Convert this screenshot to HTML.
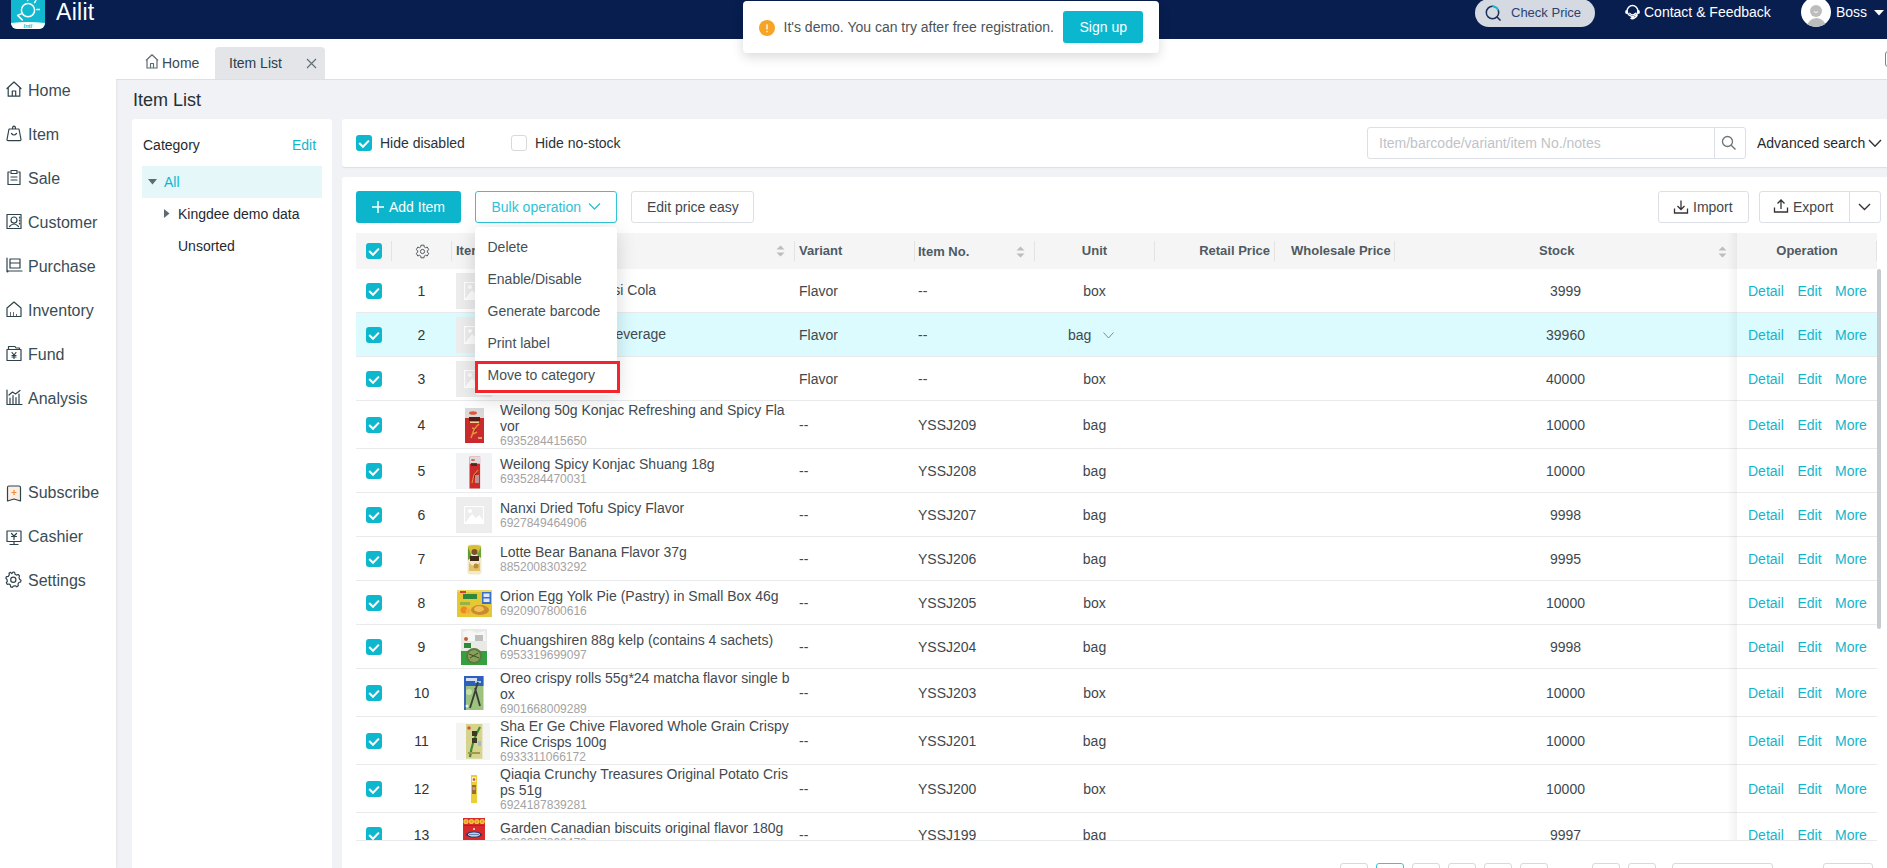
<!DOCTYPE html>
<html><head><meta charset="utf-8">
<style>
*{box-sizing:border-box;margin:0;padding:0}
html,body{width:1887px;height:868px;overflow:hidden}
body{position:relative;background:#f0f2f5;font-family:"Liberation Sans",sans-serif;color:#333;}
.a{position:absolute}
.t{position:absolute;white-space:nowrap;line-height:1}
.f12{font-size:12px}.f13{font-size:13px}.f14{font-size:14px}.f16{font-size:16px}.f18{font-size:18px}
#hdr{left:0;top:0;width:1887px;height:39px;background:#071e4f}
#side{left:0;top:39px;width:116px;height:829px;background:#fff;box-shadow:1px 0 2px rgba(0,0,0,.06)}
.mi{color:#3a4c55}
#tabs{left:116px;top:39px;width:1771px;height:41px;background:#fff;border-bottom:1px solid #dcdfe6}
.card{background:#fff;border-radius:3px}
.cb{position:absolute;width:16px;height:16px;border-radius:3px;background:#0db7ce}
.cb svg{position:absolute;left:0;top:0}
.cbo{position:absolute;width:16px;height:16px;border-radius:3px;background:#fff;border:1px solid #d9d9d9}
.btn{position:absolute;border-radius:3px;border:1px solid #d9dce2;background:#fff}
.row{position:absolute;left:356px;width:1521px;border-bottom:1px solid #ebeef0;background:#fff}
.num{color:#333}
.link{color:#13b5cc}
.img{position:absolute;width:36px;height:36px;background:#eeeeee}
</style></head><body>

<!-- HEADER -->
<div id="hdr" class="a">
  <div class="a" style="left:11px;top:-5px;width:34px;height:34px;border-radius:6px;background:#12b8cf;overflow:hidden">
    <svg class="a" style="left:0;top:0" width="34" height="34" viewBox="0 0 34 34">
      <circle cx="17" cy="15.2" r="6.6" fill="none" stroke="#fff" stroke-width="1.5"/>
      <path d="M10.8 18.6 L6.6 20.4 L11.4 25" fill="none" stroke="#fff" stroke-width="1.5" stroke-linejoin="round" stroke-linecap="round"/>
      <path d="M25.8 14.5 h2.6 M23.6 7.6 l1.2 -2 M16.6 3.8 v1.6" stroke="#fff" stroke-width="1.5" stroke-linecap="round"/>
      <path d="M0 28 Q17 26.2 34 28 V34 H0Z" fill="#fff"/>
      <text x="16.8" y="33.2" font-size="5.6" font-weight="bold" fill="#12b8cf" text-anchor="middle" font-family="Liberation Sans" font-style="italic">Intl</text>
    </svg>
  </div>
  <div class="t" style="left:56px;top:0.6px;font-size:23px;letter-spacing:0.3px;color:#fff">Ailit</div>

  <div class="a" style="left:1475px;top:-1px;width:120px;height:28px;border-radius:14px;background:#d5d9e1"></div>
  <svg class="a" style="left:1485px;top:4.5px" width="17" height="17" viewBox="0 0 17 17">
    <circle cx="7.5" cy="7.5" r="6.2" fill="none" stroke="#1a2f57" stroke-width="1.5"/>
    <path d="M7.5 1.3 A6.2 6.2 0 0 1 13.2 5.6" fill="none" stroke="#19c3e0" stroke-width="1.5"/>
    <path d="M12 12 L15.5 15.5" stroke="#1a2f57" stroke-width="1.6"/>
  </svg>
  <div class="t f13" style="left:1511px;top:6px;color:#2c4272">Check Price</div>

  <svg class="a" style="left:1622px;top:3px" width="20" height="18" viewBox="0 0 20 18">
    <circle cx="10.5" cy="8" r="5.4" fill="none" stroke="#fff" stroke-width="1.5"/>
    <ellipse cx="4.6" cy="9" rx="1.5" ry="2" fill="#fff"/>
    <ellipse cx="16.6" cy="9" rx="1.3" ry="2" fill="#fff"/>
    <path d="M7.8 10.3 Q10.5 13.5 13.6 10.3" fill="none" stroke="#fff" stroke-width="1.3" stroke-linecap="round"/>
    <path d="M15.4 11.5 Q14.2 14.8 11 15.2" fill="none" stroke="#fff" stroke-width="1.4"/>
    <ellipse cx="10.4" cy="15.2" rx="1.9" ry="1.3" fill="#fff"/>
  </svg>
  <div class="t f14" style="left:1644px;top:5px;color:#fff">Contact &amp; Feedback</div>

  <div class="a" style="left:1801px;top:-3px;width:30px;height:30px;border-radius:50%;background:#fff;overflow:hidden">
    <div class="a" style="left:9px;top:7.5px;width:12px;height:12px;border-radius:50%;background:#bdbdbd"></div>
    <svg class="a" style="left:12px;top:14px" width="6" height="3" viewBox="0 0 6 3"><path d="M0.8 0.5 Q3 2.8 5.2 0.5" fill="none" stroke="#fff" stroke-width="0.9"/></svg>
    <div class="a" style="left:5.5px;top:20.8px;width:19px;height:14px;border-radius:9.5px 9.5px 4px 4px;background:#bdbdbd"></div>
  </div>
  <div class="t f14" style="left:1836px;top:5px;color:#fff">Boss</div>
  <svg class="a" style="left:1874px;top:10px" width="10" height="6" viewBox="0 0 10 6"><path d="M0 0 H10 L5 5.5Z" fill="#fff"/></svg>
</div>

<!-- SIDEBAR -->
<div id="side" class="a"></div>
<div class="t f16 mi" style="left:28px;top:83px">Home</div>
<svg class="a" style="left:6px;top:81px" width="17" height="17" viewBox="0 0 17 17"><path d="M1 7.5 L8 1 L15 7.5 M2.2 6.5 V15.2 H13.8 V6.5 M6.3 15.2 V10 H9.7 V15.2" fill="none" stroke="#2f434c" stroke-width="1.2" stroke-linejoin="round" stroke-linecap="round"/></svg>
<div class="t f16 mi" style="left:28px;top:127px">Item</div>
<svg class="a" style="left:6px;top:125px" width="17" height="17" viewBox="0 0 17 17"><path d="M3 4 H13 L15 14.5 Q15 15.6 14 15.6 H2 Q1 15.6 1 14.5 Z M6.5 4 Q6.5 1.2 8 1.2 Q9.5 1.2 9.5 4 M5.5 8.5 Q8 11.5 10.5 8.5" fill="none" stroke="#2f434c" stroke-width="1.2" stroke-linejoin="round" stroke-linecap="round"/></svg>
<div class="t f16 mi" style="left:28px;top:171px">Sale</div>
<svg class="a" style="left:6px;top:169px" width="17" height="17" viewBox="0 0 17 17"><path d="M3.5 3 H2 V15.5 H14 V3 H12.5 M5 1.5 H11 V4.5 H5 Z M5 8 H11 M5 11 H11" fill="none" stroke="#2f434c" stroke-width="1.2" stroke-linejoin="round" stroke-linecap="round"/></svg>
<div class="t f16 mi" style="left:28px;top:215px">Customer</div>
<svg class="a" style="left:6px;top:213px" width="17" height="17" viewBox="0 0 17 17"><path d="M1 1.5 H15 V15.5 H1 Z M5 7 A3 3 0 1 0 11 7 A3 3 0 1 0 5 7 M3.5 13.5 Q8 8.5 12.5 13.5 M13.5 4 V5 M13.5 7 V8 M13.5 10 V11" fill="none" stroke="#2f434c" stroke-width="1.2" stroke-linejoin="round" stroke-linecap="round"/></svg>
<div class="t f16 mi" style="left:28px;top:259px">Purchase</div>
<svg class="a" style="left:6px;top:257px" width="17" height="17" viewBox="0 0 17 17"><path d="M1 1 V14 M1 14 H16 M4 2 H14 V11 H4 Z M4 6 H14" fill="none" stroke="#2f434c" stroke-width="1.2" stroke-linejoin="round" stroke-linecap="round"/><circle cx="1.5" cy="14.5" r="1" fill="#2f434c"/></svg>
<div class="t f16 mi" style="left:28px;top:303px">Inventory</div>
<svg class="a" style="left:6px;top:301px" width="17" height="17" viewBox="0 0 17 17"><path d="M1 7 L8 1 L15 7 V15.5 H1 Z" fill="none" stroke="#2f434c" stroke-width="1.2" stroke-linejoin="round" stroke-linecap="round"/><path d="M4 12 h1 M4 14 h1 M7 12 h1 M7 14 h1 M10 14 h1" stroke="#2f434c" stroke-width="1.3"/></svg>
<div class="t f16 mi" style="left:28px;top:347px">Fund</div>
<svg class="a" style="left:6px;top:345px" width="17" height="17" viewBox="0 0 17 17"><path d="M1 4.5 H15 V15.5 H1 Z M2.5 4.5 V1.5 H9 L10 3 H13.5 V4.5 M6 7.5 L8 10 L10 7.5 M8 10 V13.5 M6 10.5 H10 M6 12 H10" fill="none" stroke="#2f434c" stroke-width="1.2" stroke-linejoin="round" stroke-linecap="round"/></svg>
<div class="t f16 mi" style="left:28px;top:391px">Analysis</div>
<svg class="a" style="left:6px;top:389px" width="17" height="17" viewBox="0 0 17 17"><path d="M1 1 V15.5 H16 M4 15 V9 M7 15 V6.5 M10 15 V8.5 M13 15 V5 M3 6 L6.5 3 L9.5 5 L14 1.5" fill="none" stroke="#2f434c" stroke-width="1.2" stroke-linejoin="round" stroke-linecap="round"/></svg>
<div class="t f16 mi" style="left:28px;top:485px">Subscribe</div>
<svg class="a" style="left:6px;top:485px" width="17" height="17" viewBox="0 0 17 17"><path d="M1.5 2.5 Q1.5 1 3 1 H13 Q14.5 1 14.5 2.5 V16 L8 14 L1.5 16 Z" fill="#fdeee4" stroke="#2f434c" stroke-width="1.2" stroke-linejoin="round"/><path d="M8 5 V10 M5.5 7.5 H10.5" stroke="#f08a3c" stroke-width="1.2"/></svg>
<div class="t f16 mi" style="left:28px;top:529px">Cashier</div>
<svg class="a" style="left:6px;top:530px" width="17" height="17" viewBox="0 0 17 17"><path d="M1 1 H15 V11.5 H1 Z M8 11.5 V14.5 M4 14.5 H12 M5.5 3.5 L8 6 L10.5 3.5 M8 6 V9.5 M5.5 6.5 H10.5" fill="none" stroke="#2f434c" stroke-width="1.2" stroke-linejoin="round" stroke-linecap="round"/></svg>
<div class="t f16 mi" style="left:28px;top:573px">Settings</div>
<svg class="a" style="left:5px;top:571px" width="17" height="17" viewBox="0 0 17 17"><path d="M8 1 L9.6 1.4 L10 3.2 L11.6 4.1 L13.3 3.5 L14.5 4.9 L14 6.6 L14.6 8.2 L16 9.2 L15.6 11 L13.9 11.5 L13 13 L13.3 14.8 L11.8 15.8 L10.3 14.8 L8.5 15 L7.3 16.3 L5.6 15.8 L5.4 14 L4 13 L2.2 13.3 L1.3 11.8 L2.3 10.3 L2 8.5 L0.8 7.2 L1.5 5.6 L3.3 5.4 L4.3 3.9 L4.1 2.1 L5.6 1.3 L6.8 2.6 Z" fill="none" stroke="#2f434c" stroke-width="1.2" stroke-linejoin="round" stroke-linecap="round"/><circle cx="8.3" cy="8.7" r="2.6" fill="none" stroke="#2f434c" stroke-width="1.2" stroke-linejoin="round" stroke-linecap="round"/></svg>

<!-- TABS -->
<div id="tabs" class="a"></div>
<svg class="a" style="left:145px;top:54px" width="14" height="15" viewBox="0 0 14 15">
  <path d="M1 6.5 L7 0.8 L13 6.5 M2 5.8 V14 H12 V5.8 M5.5 14 V9.5 H8.5 V14" fill="none" stroke="#5d6b73" stroke-width="1.2" stroke-linejoin="round"/>
</svg>
<div class="t f14" style="left:162px;top:56px;color:#3a4a52">Home</div>
<div class="a" style="left:215px;top:47px;width:110px;height:32px;background:#e3e5e9;border-radius:4px 4px 0 0"></div>
<div class="t f14" style="left:229px;top:56px;color:#2a3d48">Item List</div>
<svg class="a" style="left:306px;top:58px" width="11" height="11" viewBox="0 0 11 11"><path d="M1 1 L10 10 M10 1 L1 10" stroke="#5f6d75" stroke-width="1.1"/></svg>
<div class="a" style="left:1885px;top:51px;width:8px;height:16px;border:1.3px solid #808080;border-radius:3px"></div>

<!-- TITLE -->
<div class="t f18" style="left:133px;top:91px;color:#262f36">Item List</div>

<!-- CATEGORY CARD -->
<div class="a card" style="left:132px;top:119px;width:200px;height:760px"></div>
<div class="t f14" style="left:143px;top:138px;color:#1f2a30">Category</div>
<div class="t f14" style="left:292px;top:138px;color:#13b5cc">Edit</div>
<div class="a" style="left:142px;top:166px;width:180px;height:32px;background:#e6f7fa"></div>
<svg class="a" style="left:148px;top:179px" width="10" height="6" viewBox="0 0 10 6"><path d="M0 0 H9 L4.5 5.5Z" fill="#5f6b72"/></svg>
<div class="t f14" style="left:164px;top:175px;color:#13b5cc">All</div>
<svg class="a" style="left:164px;top:209px" width="6" height="10" viewBox="0 0 6 10"><path d="M0 0 V9 L5.5 4.5Z" fill="#5f6b72"/></svg>
<div class="t f14" style="left:178px;top:207px;color:#1f2a30">Kingdee demo data</div>
<div class="t f14" style="left:178px;top:239px;color:#1f2a30">Unsorted</div>

<!-- FILTER CARD -->
<div class="a card" style="left:342px;top:119px;width:1560px;height:48px;box-shadow:0 1px 1px rgba(0,0,0,.08)"></div>
<div class="cb" style="left:356px;top:135px"><svg width="16" height="16" viewBox="0 0 16 16"><path d="M3.2 8 L7 11.8 L12.9 5.6" fill="none" stroke="#fff" stroke-width="2.1"/></svg></div>
<div class="t f14" style="left:380px;top:136px;color:#2a3238">Hide disabled</div>
<div class="cbo" style="left:511px;top:135px"></div>
<div class="t f14" style="left:535px;top:136px;color:#2a3238">Hide no-stock</div>
<div class="a" style="left:1367px;top:127px;width:379px;height:32px;border:1px solid #dcdfe6;border-radius:3px;background:#fff"></div>
<div class="a" style="left:1714px;top:128px;width:1px;height:30px;background:#dcdfe6"></div>
<div class="t f14" style="left:1379px;top:136px;color:#bfc3c8">Item/barcode/variant/item No./notes</div>
<svg class="a" style="left:1721px;top:135px" width="16" height="16" viewBox="0 0 16 16"><circle cx="6.5" cy="6.5" r="5" fill="none" stroke="#6c757b" stroke-width="1.3"/><path d="M10.2 10.2 L14.5 14.5" stroke="#6c757b" stroke-width="1.4"/></svg>
<div class="t f14" style="left:1757px;top:136px;color:#1f2a30">Advanced search</div>
<svg class="a" style="left:1868px;top:139px" width="14" height="9" viewBox="0 0 14 9"><path d="M1 1 L7 7.2 L13 1" fill="none" stroke="#333" stroke-width="1.4"/></svg>

<!-- TABLE CARD -->
<div class="a card" style="left:342px;top:177px;width:1560px;height:700px"></div>
<div class="a" style="left:356px;top:191px;width:105px;height:32px;border-radius:3px;background:#0db5cc"></div>
<svg class="a" style="left:371px;top:200px" width="14" height="14" viewBox="0 0 14 14"><path d="M7 1 V13 M1 7 H13" stroke="#fff" stroke-width="1.5"/></svg>
<div class="t" style="left:389px;top:199.95px;font-size:14px;color:#fff;">Add Item</div>
<div class="a" style="left:475px;top:191px;width:142px;height:32px;border-radius:3px;border:1px solid #2ec6d8;background:#fff"></div>
<div class="t" style="left:491.5px;top:199.95px;font-size:14px;color:#2fc2d6;">Bulk operation</div>
<svg class="a" style="left:588px;top:202px" width="13" height="9" viewBox="0 0 13 9"><path d="M1 1.5 L6.5 7 L12 1.5" fill="none" stroke="#2fc2d6" stroke-width="1.4"/></svg>
<div class="a" style="left:631px;top:191px;width:123px;height:32px;border-radius:3px;border:1px solid #dcdfe6;background:#fff"></div>
<div class="t" style="left:647px;top:199.95px;font-size:14px;color:#41484d;">Edit price easy</div>
<div class="a" style="left:1658px;top:191px;width:91px;height:32px;border-radius:3px;border:1px solid #dcdfe6;background:#fff"></div>
<svg class="a" style="left:1673px;top:199px" width="16" height="16" viewBox="0 0 16 16"><path d="M8 1.5 V10.5 M4.5 7 L8 10.5 L11.5 7 M1.5 9.5 V14 H14.5 V9.5" fill="none" stroke="#333" stroke-width="1.3"/></svg>
<div class="t" style="left:1693px;top:199.95px;font-size:14px;color:#41484d;">Import</div>
<div class="a" style="left:1759px;top:191px;width:122px;height:32px;border-radius:3px;border:1px solid #dcdfe6;background:#fff"></div>
<div class="a" style="left:1849px;top:192px;width:1px;height:30px;background:#dcdfe6"></div>
<svg class="a" style="left:1773px;top:198px" width="16" height="16" viewBox="0 0 16 16"><path d="M8 11 V2 M4.5 5.5 L8 2 L11.5 5.5 M1.5 9.5 V14 H14.5 V9.5" fill="none" stroke="#333" stroke-width="1.3"/></svg>
<div class="t" style="left:1793px;top:199.95px;font-size:14px;color:#41484d;">Export</div>
<svg class="a" style="left:1858px;top:203px" width="13" height="8" viewBox="0 0 13 8"><path d="M1 1 L6.5 6.5 L12 1" fill="none" stroke="#333" stroke-width="1.4"/></svg>
<div class="a" style="left:356px;top:233px;width:1521px;height:36px;background:#f5f5f5"></div>
<div class="a" style="left:391px;top:241px;width:1px;height:20px;background:#e3e3e3"></div>
<div class="a" style="left:451px;top:241px;width:1px;height:20px;background:#e3e3e3"></div>
<div class="a" style="left:794px;top:241px;width:1px;height:20px;background:#e3e3e3"></div>
<div class="a" style="left:914px;top:241px;width:1px;height:20px;background:#e3e3e3"></div>
<div class="a" style="left:1034px;top:241px;width:1px;height:20px;background:#e3e3e3"></div>
<div class="a" style="left:1154px;top:241px;width:1px;height:20px;background:#e3e3e3"></div>
<div class="a" style="left:1274px;top:241px;width:1px;height:20px;background:#e3e3e3"></div>
<div class="a" style="left:1394px;top:241px;width:1px;height:20px;background:#e3e3e3"></div>
<div class="a" style="left:1876px;top:241px;width:1px;height:20px;background:#e3e3e3"></div>
<div class="cb" style="left:366px;top:243px"><svg width="16" height="16" viewBox="0 0 16 16"><path d="M3.2 8 L7 11.8 L12.9 5.6" fill="none" stroke="#fff" stroke-width="2.1"/></svg></div>
<svg class="a" style="left:414.8px;top:244px" width="15" height="15" viewBox="0 0 15 15"><path d="M9.07 1.19 L5.93 1.19 L5.82 2.90 L4.35 3.75 L2.82 2.98 L1.25 5.71 L2.67 6.65 L2.67 8.35 L1.25 9.29 L2.82 12.02 L4.35 11.25 L5.82 12.10 L5.93 13.81 L9.07 13.81 L9.18 12.10 L10.65 11.25 L12.18 12.02 L13.75 9.29 L12.33 8.35 L12.33 6.65 L13.75 5.71 L12.18 2.98 L10.65 3.75 L9.18 2.90Z" fill="none" stroke="#565c62" stroke-width="1" stroke-linejoin="round"/><circle cx="7.5" cy="7.5" r="2.1" fill="none" stroke="#565c62" stroke-width="1"/></svg>
<div class="t" style="left:456px;top:243.50px;font-size:13px;color:#4f5a62;font-weight:bold">Item</div>
<svg class="a" style="left:776px;top:245px" width="9" height="12" viewBox="0 0 9 12"><path d="M4.5 0.5 L8.5 4.5 H0.5Z M4.5 11.5 L8.5 7.5 H0.5Z" fill="#bdbdbd"/></svg>
<div class="t" style="left:799px;top:243.50px;font-size:13px;color:#4f5a62;font-weight:bold">Variant</div>
<div class="t" style="left:918px;top:244.50px;font-size:13px;color:#4f5a62;font-weight:bold">Item No.</div>
<svg class="a" style="left:1016px;top:246px" width="9" height="12" viewBox="0 0 9 12"><path d="M4.5 0.5 L8.5 4.5 H0.5Z M4.5 11.5 L8.5 7.5 H0.5Z" fill="#bdbdbd"/></svg>
<div class="t" style="left:1034.5px;width:120px;text-align:center;top:243.50px;font-size:13px;color:#4f5a62;font-weight:bold">Unit</div>
<div class="t" style="left:1150px;width:120px;text-align:right;top:243.50px;font-size:13px;color:#4f5a62;font-weight:bold">Retail Price</div>
<div class="t" style="left:1291px;top:243.50px;font-size:13px;color:#4f5a62;font-weight:bold">Wholesale Price</div>
<div class="t" style="left:1539px;top:244.00px;font-size:13px;color:#4f5a62;font-weight:bold">Stock</div>
<svg class="a" style="left:1718px;top:246px" width="9" height="12" viewBox="0 0 9 12"><path d="M4.5 0.5 L8.5 4.5 H0.5Z M4.5 11.5 L8.5 7.5 H0.5Z" fill="#bdbdbd"/></svg>
<div class="t" style="left:1737.0px;width:140px;text-align:center;top:243.50px;font-size:13px;color:#4f5a62;font-weight:bold">Operation</div>
<div class="a" style="left:356px;top:269px;width:1521px;height:571px;overflow:hidden;background:#fff">
<div class="a" style="left:0;top:0px;width:1521px;height:44px;background:#fff;border-bottom:1px solid #e9eaeb"></div>
<div class="cb" style="left:10px;top:14px"><svg width="16" height="16" viewBox="0 0 16 16"><path d="M3.2 8 L7 11.8 L12.9 5.6" fill="none" stroke="#fff" stroke-width="2.1"/></svg></div>
<div class="t" style="left:35.5px;width:60px;text-align:center;top:14.50px;font-size:14px;color:#333;">1</div>
<div class="a" style="left:100px;top:4px;width:36px;height:36px;background:#ededed"><svg class="a" style="left:8px;top:9px" width="20" height="18" viewBox="0 0 20 18"><rect x="0.5" y="0.5" width="19" height="17" fill="none" stroke="#fff" stroke-width="1.2"/><circle cx="6" cy="5" r="2" fill="#fff"/><path d="M1 17 L8 8 L12 12 L15 9 L19 14 V17Z" fill="#fff"/></svg></div>
<div class="t" style="left:132.76999999999998px;top:13.50px;font-size:14px;color:#424a50;">Multi-unit demo Pepsi Cola</div>
<div class="t" style="left:443px;top:14.50px;font-size:14px;color:#41484d;">Flavor</div>
<div class="t" style="left:562px;top:14.50px;font-size:14px;color:#41484d;">--</div>
<div class="t" style="left:678.5px;width:120px;text-align:center;top:14.50px;font-size:14px;color:#41484d;">box</div>
<div class="t" style="left:1149.5px;width:120px;text-align:center;top:14.50px;font-size:14px;color:#41484d;">3999</div>
<div class="a" style="left:1381px;top:0px;width:140px;height:44px;background:#fff;border-bottom:1px solid #e9eaeb"></div>
<div class="t" style="left:1392px;top:14.50px;font-size:14px;color:#13b5cc;">Detail</div>
<div class="t" style="left:1441.5px;top:14.50px;font-size:14px;color:#13b5cc;">Edit</div>
<div class="t" style="left:1479px;top:14.50px;font-size:14px;color:#13b5cc;">More</div>
<div class="a" style="left:0;top:44px;width:1521px;height:44px;background:#dbfbfe;border-bottom:1px solid #e9eaeb"></div>
<div class="cb" style="left:10px;top:58px"><svg width="16" height="16" viewBox="0 0 16 16"><path d="M3.2 8 L7 11.8 L12.9 5.6" fill="none" stroke="#fff" stroke-width="2.1"/></svg></div>
<div class="t" style="left:35.5px;width:60px;text-align:center;top:58.50px;font-size:14px;color:#333;">2</div>
<div class="a" style="left:100px;top:48px;width:36px;height:36px;background:#ededed"><svg class="a" style="left:8px;top:9px" width="20" height="18" viewBox="0 0 20 18"><rect x="0.5" y="0.5" width="19" height="17" fill="none" stroke="#fff" stroke-width="1.2"/><circle cx="6" cy="5" r="2" fill="#fff"/><path d="M1 17 L8 8 L12 12 L15 9 L19 14 V17Z" fill="#fff"/></svg></div>
<div class="t" style="left:163.77999999999997px;top:57.50px;font-size:14px;color:#424a50;">Multi-unit fruit beverage</div>
<div class="t" style="left:443px;top:58.50px;font-size:14px;color:#41484d;">Flavor</div>
<div class="t" style="left:562px;top:58.50px;font-size:14px;color:#41484d;">--</div>
<div class="t" style="left:712px;top:58.50px;font-size:14px;color:#41484d;">bag</div>
<svg class="a" style="left:747px;top:63px" width="11" height="7" viewBox="0 0 11 7"><path d="M0.5 0.5 L5.5 6 L10.5 0.5" fill="none" stroke="#888" stroke-width="1"/></svg>
<div class="t" style="left:1149.5px;width:120px;text-align:center;top:58.50px;font-size:14px;color:#41484d;">39960</div>
<div class="a" style="left:1381px;top:44px;width:140px;height:44px;background:#dbfbfe;border-bottom:1px solid #e9eaeb"></div>
<div class="t" style="left:1392px;top:58.50px;font-size:14px;color:#13b5cc;">Detail</div>
<div class="t" style="left:1441.5px;top:58.50px;font-size:14px;color:#13b5cc;">Edit</div>
<div class="t" style="left:1479px;top:58.50px;font-size:14px;color:#13b5cc;">More</div>
<div class="a" style="left:0;top:88px;width:1521px;height:44px;background:#fff;border-bottom:1px solid #e9eaeb"></div>
<div class="cb" style="left:10px;top:102px"><svg width="16" height="16" viewBox="0 0 16 16"><path d="M3.2 8 L7 11.8 L12.9 5.6" fill="none" stroke="#fff" stroke-width="2.1"/></svg></div>
<div class="t" style="left:35.5px;width:60px;text-align:center;top:102.50px;font-size:14px;color:#333;">3</div>
<div class="a" style="left:100px;top:92px;width:36px;height:36px;background:#ededed"><svg class="a" style="left:8px;top:9px" width="20" height="18" viewBox="0 0 20 18"><rect x="0.5" y="0.5" width="19" height="17" fill="none" stroke="#fff" stroke-width="1.2"/><circle cx="6" cy="5" r="2" fill="#fff"/><path d="M1 17 L8 8 L12 12 L15 9 L19 14 V17Z" fill="#fff"/></svg></div>
<div class="t" style="left:443px;top:102.50px;font-size:14px;color:#41484d;">Flavor</div>
<div class="t" style="left:562px;top:102.50px;font-size:14px;color:#41484d;">--</div>
<div class="t" style="left:678.5px;width:120px;text-align:center;top:102.50px;font-size:14px;color:#41484d;">box</div>
<div class="t" style="left:1149.5px;width:120px;text-align:center;top:102.50px;font-size:14px;color:#41484d;">40000</div>
<div class="a" style="left:1381px;top:88px;width:140px;height:44px;background:#fff;border-bottom:1px solid #e9eaeb"></div>
<div class="t" style="left:1392px;top:102.50px;font-size:14px;color:#13b5cc;">Detail</div>
<div class="t" style="left:1441.5px;top:102.50px;font-size:14px;color:#13b5cc;">Edit</div>
<div class="t" style="left:1479px;top:102.50px;font-size:14px;color:#13b5cc;">More</div>
<div class="a" style="left:0;top:132px;width:1521px;height:48px;background:#fff;border-bottom:1px solid #e9eaeb"></div>
<div class="cb" style="left:10px;top:148px"><svg width="16" height="16" viewBox="0 0 16 16"><path d="M3.2 8 L7 11.8 L12.9 5.6" fill="none" stroke="#fff" stroke-width="2.1"/></svg></div>
<div class="t" style="left:35.5px;width:60px;text-align:center;top:148.50px;font-size:14px;color:#333;">4</div>
<svg class="a" style="left:108.69999999999999px;top:138.60000000000002px" width="19" height="35" viewBox="0 0 19 35"><rect width="19" height="35" fill="#c92a2c"/><rect width="19" height="10" fill="#dadada"/><ellipse cx="8" cy="5" rx="4" ry="1.8" fill="#e0573a"/><rect x="4" y="9" width="11" height="4" fill="#5a1a16"/><rect x="5" y="13.5" width="9" height="1.5" fill="#f2d090"/><path d="M6 30 L9 22 L12 18 L14 16 M8 26 L12 24 M7 20 L10 21" stroke="#f0b040" stroke-width="1.6" opacity=".75"/><rect x="13" y="29" width="4" height="2" fill="#f4e0c0" opacity=".6"/></svg>
<div class="t" style="left:144px;top:133.50px;font-size:14px;color:#424a50;">Weilong 50g Konjac Refreshing and Spicy Fla</div>
<div class="t" style="left:144px;top:149.50px;font-size:14px;color:#424a50;">vor</div>
<div class="t" style="left:144px;top:165.50px;font-size:12px;color:#a3a3a3;">6935284415650</div>
<div class="t" style="left:443px;top:148.50px;font-size:14px;color:#41484d;">--</div>
<div class="t" style="left:562px;top:148.50px;font-size:14px;color:#41484d;">YSSJ209</div>
<div class="t" style="left:678.5px;width:120px;text-align:center;top:148.50px;font-size:14px;color:#41484d;">bag</div>
<div class="t" style="left:1149.5px;width:120px;text-align:center;top:148.50px;font-size:14px;color:#41484d;">10000</div>
<div class="a" style="left:1381px;top:132px;width:140px;height:48px;background:#fff;border-bottom:1px solid #e9eaeb"></div>
<div class="t" style="left:1392px;top:148.50px;font-size:14px;color:#13b5cc;">Detail</div>
<div class="t" style="left:1441.5px;top:148.50px;font-size:14px;color:#13b5cc;">Edit</div>
<div class="t" style="left:1479px;top:148.50px;font-size:14px;color:#13b5cc;">More</div>
<div class="a" style="left:0;top:180px;width:1521px;height:44px;background:#fff;border-bottom:1px solid #e9eaeb"></div>
<div class="cb" style="left:10px;top:194px"><svg width="16" height="16" viewBox="0 0 16 16"><path d="M3.2 8 L7 11.8 L12.9 5.6" fill="none" stroke="#fff" stroke-width="2.1"/></svg></div>
<div class="t" style="left:35.5px;width:60px;text-align:center;top:194.50px;font-size:14px;color:#333;">5</div>
<svg class="a" style="left:100px;top:184px" width="36" height="36" viewBox="0 0 36 36"><rect width="36" height="36" fill="#f2f3f4"/><rect x="13.5" y="3.7" width="10.6" height="31.8" fill="#cc2a28"/><rect x="13.5" y="3.7" width="10.6" height="7" fill="#dcdcdc"/><ellipse cx="17" cy="7" rx="2" ry="1" fill="#e25a3a"/><rect x="15" y="10" width="6" height="3" fill="#2a2a2a" opacity=".8"/><path d="M16 30 L18 22 L22 17" stroke="#f0b040" stroke-width="1.2" opacity=".7"/><rect x="19" y="22" width="4" height="8" fill="#bcbcbc" opacity=".7"/></svg>
<div class="t" style="left:144px;top:187.50px;font-size:14px;color:#424a50;">Weilong Spicy Konjac Shuang 18g</div>
<div class="t" style="left:144px;top:203.50px;font-size:12px;color:#a3a3a3;">6935284470031</div>
<div class="t" style="left:443px;top:194.50px;font-size:14px;color:#41484d;">--</div>
<div class="t" style="left:562px;top:194.50px;font-size:14px;color:#41484d;">YSSJ208</div>
<div class="t" style="left:678.5px;width:120px;text-align:center;top:194.50px;font-size:14px;color:#41484d;">bag</div>
<div class="t" style="left:1149.5px;width:120px;text-align:center;top:194.50px;font-size:14px;color:#41484d;">10000</div>
<div class="a" style="left:1381px;top:180px;width:140px;height:44px;background:#fff;border-bottom:1px solid #e9eaeb"></div>
<div class="t" style="left:1392px;top:194.50px;font-size:14px;color:#13b5cc;">Detail</div>
<div class="t" style="left:1441.5px;top:194.50px;font-size:14px;color:#13b5cc;">Edit</div>
<div class="t" style="left:1479px;top:194.50px;font-size:14px;color:#13b5cc;">More</div>
<div class="a" style="left:0;top:224px;width:1521px;height:44px;background:#fff;border-bottom:1px solid #e9eaeb"></div>
<div class="cb" style="left:10px;top:238px"><svg width="16" height="16" viewBox="0 0 16 16"><path d="M3.2 8 L7 11.8 L12.9 5.6" fill="none" stroke="#fff" stroke-width="2.1"/></svg></div>
<div class="t" style="left:35.5px;width:60px;text-align:center;top:238.50px;font-size:14px;color:#333;">6</div>
<div class="a" style="left:100px;top:228px;width:36px;height:36px;background:#ededed"><svg class="a" style="left:8px;top:9px" width="20" height="18" viewBox="0 0 20 18"><rect x="0.5" y="0.5" width="19" height="17" fill="none" stroke="#fff" stroke-width="1.2"/><circle cx="6" cy="5" r="2" fill="#fff"/><path d="M1 17 L8 8 L12 12 L15 9 L19 14 V17Z" fill="#fff"/></svg></div>
<div class="t" style="left:144px;top:231.50px;font-size:14px;color:#424a50;">Nanxi Dried Tofu Spicy Flavor</div>
<div class="t" style="left:144px;top:247.50px;font-size:12px;color:#a3a3a3;">6927849464906</div>
<div class="t" style="left:443px;top:238.50px;font-size:14px;color:#41484d;">--</div>
<div class="t" style="left:562px;top:238.50px;font-size:14px;color:#41484d;">YSSJ207</div>
<div class="t" style="left:678.5px;width:120px;text-align:center;top:238.50px;font-size:14px;color:#41484d;">bag</div>
<div class="t" style="left:1149.5px;width:120px;text-align:center;top:238.50px;font-size:14px;color:#41484d;">9998</div>
<div class="a" style="left:1381px;top:224px;width:140px;height:44px;background:#fff;border-bottom:1px solid #e9eaeb"></div>
<div class="t" style="left:1392px;top:238.50px;font-size:14px;color:#13b5cc;">Detail</div>
<div class="t" style="left:1441.5px;top:238.50px;font-size:14px;color:#13b5cc;">Edit</div>
<div class="t" style="left:1479px;top:238.50px;font-size:14px;color:#13b5cc;">More</div>
<div class="a" style="left:0;top:268px;width:1521px;height:44px;background:#fff;border-bottom:1px solid #e9eaeb"></div>
<div class="cb" style="left:10px;top:282px"><svg width="16" height="16" viewBox="0 0 16 16"><path d="M3.2 8 L7 11.8 L12.9 5.6" fill="none" stroke="#fff" stroke-width="2.1"/></svg></div>
<div class="t" style="left:35.5px;width:60px;text-align:center;top:282.50px;font-size:14px;color:#333;">7</div>
<svg class="a" style="left:110.5px;top:275px" width="15" height="31" viewBox="0 0 15 31"><rect x="0.5" y="0.5" width="14" height="30" rx="3" fill="#f1e9c8"/><path d="M1 2 Q7 0 14 2 V10 H1Z" fill="#d7be3a"/><path d="M1 3 L5 13 L1 16Z" fill="#5d9a3a"/><path d="M14 3 L10 11 L14 14Z" fill="#6aa53c"/><circle cx="7.5" cy="8" r="3" fill="#7a5228"/><rect x="3" y="12" width="9" height="5" fill="#3f2a1a"/><path d="M2 18 Q7 26 13 18 V27 H2Z" fill="#e2c266"/><circle cx="9" cy="22" r="2.5" fill="#b88a3a"/></svg>
<div class="t" style="left:144px;top:275.50px;font-size:14px;color:#424a50;">Lotte Bear Banana Flavor 37g</div>
<div class="t" style="left:144px;top:291.50px;font-size:12px;color:#a3a3a3;">8852008303292</div>
<div class="t" style="left:443px;top:282.50px;font-size:14px;color:#41484d;">--</div>
<div class="t" style="left:562px;top:282.50px;font-size:14px;color:#41484d;">YSSJ206</div>
<div class="t" style="left:678.5px;width:120px;text-align:center;top:282.50px;font-size:14px;color:#41484d;">bag</div>
<div class="t" style="left:1149.5px;width:120px;text-align:center;top:282.50px;font-size:14px;color:#41484d;">9995</div>
<div class="a" style="left:1381px;top:268px;width:140px;height:44px;background:#fff;border-bottom:1px solid #e9eaeb"></div>
<div class="t" style="left:1392px;top:282.50px;font-size:14px;color:#13b5cc;">Detail</div>
<div class="t" style="left:1441.5px;top:282.50px;font-size:14px;color:#13b5cc;">Edit</div>
<div class="t" style="left:1479px;top:282.50px;font-size:14px;color:#13b5cc;">More</div>
<div class="a" style="left:0;top:312px;width:1521px;height:44px;background:#fff;border-bottom:1px solid #e9eaeb"></div>
<div class="cb" style="left:10px;top:326px"><svg width="16" height="16" viewBox="0 0 16 16"><path d="M3.2 8 L7 11.8 L12.9 5.6" fill="none" stroke="#fff" stroke-width="2.1"/></svg></div>
<div class="t" style="left:35.5px;width:60px;text-align:center;top:326.50px;font-size:14px;color:#333;">8</div>
<svg class="a" style="left:100.60000000000002px;top:320.70000000000005px" width="35" height="27" viewBox="0 0 35 27"><rect width="35" height="27" fill="#e7c834"/><rect x="0" y="0" width="35" height="2" fill="#f0d860"/><rect x="3" y="1" width="6" height="2" fill="#d04040"/><rect x="6" y="4" width="14" height="5" fill="#2e8a3a"/><rect x="25" y="2" width="9" height="12" fill="#3a6fc8"/><rect x="26.5" y="3.5" width="6" height="3.5" fill="#dfe8f8"/><rect x="26.5" y="8.5" width="6" height="3.5" fill="#dfe8f8"/><ellipse cx="23" cy="20" rx="9" ry="5" fill="#c98a34"/><ellipse cx="22" cy="19" rx="5" ry="3" fill="#f2c050"/><circle cx="7" cy="20" r="3.5" fill="#f08a20"/><circle cx="11" cy="21" r="2.5" fill="#f7a840"/><rect x="3" y="12" width="10" height="3" fill="#7fb04a" opacity=".8"/></svg>
<div class="t" style="left:144px;top:319.50px;font-size:14px;color:#424a50;">Orion Egg Yolk Pie (Pastry) in Small Box 46g</div>
<div class="t" style="left:144px;top:335.50px;font-size:12px;color:#a3a3a3;">6920907800616</div>
<div class="t" style="left:443px;top:326.50px;font-size:14px;color:#41484d;">--</div>
<div class="t" style="left:562px;top:326.50px;font-size:14px;color:#41484d;">YSSJ205</div>
<div class="t" style="left:678.5px;width:120px;text-align:center;top:326.50px;font-size:14px;color:#41484d;">box</div>
<div class="t" style="left:1149.5px;width:120px;text-align:center;top:326.50px;font-size:14px;color:#41484d;">10000</div>
<div class="a" style="left:1381px;top:312px;width:140px;height:44px;background:#fff;border-bottom:1px solid #e9eaeb"></div>
<div class="t" style="left:1392px;top:326.50px;font-size:14px;color:#13b5cc;">Detail</div>
<div class="t" style="left:1441.5px;top:326.50px;font-size:14px;color:#13b5cc;">Edit</div>
<div class="t" style="left:1479px;top:326.50px;font-size:14px;color:#13b5cc;">More</div>
<div class="a" style="left:0;top:356px;width:1521px;height:44px;background:#fff;border-bottom:1px solid #e9eaeb"></div>
<div class="cb" style="left:10px;top:370px"><svg width="16" height="16" viewBox="0 0 16 16"><path d="M3.2 8 L7 11.8 L12.9 5.6" fill="none" stroke="#fff" stroke-width="2.1"/></svg></div>
<div class="t" style="left:35.5px;width:60px;text-align:center;top:370.50px;font-size:14px;color:#333;">9</div>
<svg class="a" style="left:104.80000000000001px;top:360px" width="26" height="36" viewBox="0 0 26 36"><rect width="26" height="36" fill="#e9e9e6"/><path d="M2 3 L9 1 L16 4 L24 2 L25 12 L3 12Z" fill="#f6f6f4"/><circle cx="5" cy="10" r="2" fill="#c85a30"/><rect x="14" y="6" width="8" height="6" fill="#9a9a9a" opacity=".6"/><rect x="3" y="14" width="7" height="5" fill="#2c8a3a"/><path d="M0 22 H26 V36 H0Z" fill="#35a040"/><circle cx="13" cy="27" r="8" fill="#5c7a40"/><circle cx="13" cy="27" r="6" fill="#8aa058"/><path d="M8 25 L18 29 M9 29 L17 24" stroke="#3a5030" stroke-width="1"/></svg>
<div class="t" style="left:144px;top:363.50px;font-size:14px;color:#424a50;">Chuangshiren 88g kelp (contains 4 sachets)</div>
<div class="t" style="left:144px;top:379.50px;font-size:12px;color:#a3a3a3;">6953319699097</div>
<div class="t" style="left:443px;top:370.50px;font-size:14px;color:#41484d;">--</div>
<div class="t" style="left:562px;top:370.50px;font-size:14px;color:#41484d;">YSSJ204</div>
<div class="t" style="left:678.5px;width:120px;text-align:center;top:370.50px;font-size:14px;color:#41484d;">bag</div>
<div class="t" style="left:1149.5px;width:120px;text-align:center;top:370.50px;font-size:14px;color:#41484d;">9998</div>
<div class="a" style="left:1381px;top:356px;width:140px;height:44px;background:#fff;border-bottom:1px solid #e9eaeb"></div>
<div class="t" style="left:1392px;top:370.50px;font-size:14px;color:#13b5cc;">Detail</div>
<div class="t" style="left:1441.5px;top:370.50px;font-size:14px;color:#13b5cc;">Edit</div>
<div class="t" style="left:1479px;top:370.50px;font-size:14px;color:#13b5cc;">More</div>
<div class="a" style="left:0;top:400px;width:1521px;height:48px;background:#fff;border-bottom:1px solid #e9eaeb"></div>
<div class="cb" style="left:10px;top:416px"><svg width="16" height="16" viewBox="0 0 16 16"><path d="M3.2 8 L7 11.8 L12.9 5.6" fill="none" stroke="#fff" stroke-width="2.1"/></svg></div>
<div class="t" style="left:35.5px;width:60px;text-align:center;top:416.50px;font-size:14px;color:#333;">10</div>
<svg class="a" style="left:108.30000000000001px;top:406.5px" width="19.5" height="34" viewBox="0 0 19.5 34"><rect width="19.5" height="34" fill="#9cc27e"/><rect width="19.5" height="10" fill="#2f5fbd"/><rect x="2" y="2" width="11" height="3" fill="#e8eef8" opacity=".9"/><rect x="11" y="5" width="6" height="2" fill="#c8e0f0" opacity=".8"/><rect x="0" y="10" width="2" height="24" fill="#3a64b4"/><path d="M14 6 L6 32 M11 12 L16 30" stroke="#3a3f36" stroke-width="1.8"/><circle cx="5" cy="16" r="3" fill="#c8dca8"/><circle cx="3" cy="30" r="1.5" fill="#e6eef0"/></svg>
<div class="t" style="left:144px;top:401.50px;font-size:14px;color:#424a50;">Oreo crispy rolls 55g*24 matcha flavor single b</div>
<div class="t" style="left:144px;top:417.50px;font-size:14px;color:#424a50;">ox</div>
<div class="t" style="left:144px;top:433.50px;font-size:12px;color:#a3a3a3;">6901668009289</div>
<div class="t" style="left:443px;top:416.50px;font-size:14px;color:#41484d;">--</div>
<div class="t" style="left:562px;top:416.50px;font-size:14px;color:#41484d;">YSSJ203</div>
<div class="t" style="left:678.5px;width:120px;text-align:center;top:416.50px;font-size:14px;color:#41484d;">box</div>
<div class="t" style="left:1149.5px;width:120px;text-align:center;top:416.50px;font-size:14px;color:#41484d;">10000</div>
<div class="a" style="left:1381px;top:400px;width:140px;height:48px;background:#fff;border-bottom:1px solid #e9eaeb"></div>
<div class="t" style="left:1392px;top:416.50px;font-size:14px;color:#13b5cc;">Detail</div>
<div class="t" style="left:1441.5px;top:416.50px;font-size:14px;color:#13b5cc;">Edit</div>
<div class="t" style="left:1479px;top:416.50px;font-size:14px;color:#13b5cc;">More</div>
<div class="a" style="left:0;top:448px;width:1521px;height:48px;background:#fff;border-bottom:1px solid #e9eaeb"></div>
<div class="cb" style="left:10px;top:464px"><svg width="16" height="16" viewBox="0 0 16 16"><path d="M3.2 8 L7 11.8 L12.9 5.6" fill="none" stroke="#fff" stroke-width="2.1"/></svg></div>
<div class="t" style="left:35.5px;width:60px;text-align:center;top:464.50px;font-size:14px;color:#333;">11</div>
<svg class="a" style="left:100.39999999999998px;top:453.5px" width="34" height="37" viewBox="0 0 34 37"><rect width="34" height="37" fill="#f4f4f3"/><rect x="10" y="1" width="16.4" height="34.7" fill="#d6d48c"/><circle cx="13" cy="5" r="1.8" fill="#d05a30"/><path d="M14 34 Q16 18 24 4" stroke="#3f8a3a" stroke-width="2.2" fill="none"/><rect x="16" y="8" width="5" height="5" fill="#3a3a22"/><rect x="16" y="15" width="5" height="5" fill="#3a3a22"/><rect x="22" y="18" width="3" height="5" fill="#a8b8c0"/><rect x="12" y="29" width="12" height="2" fill="#a09a50"/></svg>
<div class="t" style="left:144px;top:449.50px;font-size:14px;color:#424a50;">Sha Er Ge Chive Flavored Whole Grain Crispy</div>
<div class="t" style="left:144px;top:465.50px;font-size:14px;color:#424a50;">Rice Crisps 100g</div>
<div class="t" style="left:144px;top:481.50px;font-size:12px;color:#a3a3a3;">6933311066172</div>
<div class="t" style="left:443px;top:464.50px;font-size:14px;color:#41484d;">--</div>
<div class="t" style="left:562px;top:464.50px;font-size:14px;color:#41484d;">YSSJ201</div>
<div class="t" style="left:678.5px;width:120px;text-align:center;top:464.50px;font-size:14px;color:#41484d;">bag</div>
<div class="t" style="left:1149.5px;width:120px;text-align:center;top:464.50px;font-size:14px;color:#41484d;">10000</div>
<div class="a" style="left:1381px;top:448px;width:140px;height:48px;background:#fff;border-bottom:1px solid #e9eaeb"></div>
<div class="t" style="left:1392px;top:464.50px;font-size:14px;color:#13b5cc;">Detail</div>
<div class="t" style="left:1441.5px;top:464.50px;font-size:14px;color:#13b5cc;">Edit</div>
<div class="t" style="left:1479px;top:464.50px;font-size:14px;color:#13b5cc;">More</div>
<div class="a" style="left:0;top:496px;width:1521px;height:48px;background:#fff;border-bottom:1px solid #e9eaeb"></div>
<div class="cb" style="left:10px;top:512px"><svg width="16" height="16" viewBox="0 0 16 16"><path d="M3.2 8 L7 11.8 L12.9 5.6" fill="none" stroke="#fff" stroke-width="2.1"/></svg></div>
<div class="t" style="left:35.5px;width:60px;text-align:center;top:512.50px;font-size:14px;color:#333;">12</div>
<svg class="a" style="left:115.39999999999998px;top:506px" width="6" height="28" viewBox="0 0 6 28"><rect width="6" height="28" fill="#e9cf38"/><rect x="1" y="2" width="4" height="5" fill="#f4f0d8"/><circle cx="3" cy="4.5" r="1.3" fill="#d04a3a"/><rect x="1" y="10" width="4" height="9" fill="#9a6a3a"/><rect x="1.5" y="12" width="3" height="3" fill="#c8a070"/></svg>
<div class="t" style="left:144px;top:497.50px;font-size:14px;color:#424a50;">Qiaqia Crunchy Treasures Original Potato Cris</div>
<div class="t" style="left:144px;top:513.50px;font-size:14px;color:#424a50;">ps 51g</div>
<div class="t" style="left:144px;top:529.50px;font-size:12px;color:#a3a3a3;">6924187839281</div>
<div class="t" style="left:443px;top:512.50px;font-size:14px;color:#41484d;">--</div>
<div class="t" style="left:562px;top:512.50px;font-size:14px;color:#41484d;">YSSJ200</div>
<div class="t" style="left:678.5px;width:120px;text-align:center;top:512.50px;font-size:14px;color:#41484d;">box</div>
<div class="t" style="left:1149.5px;width:120px;text-align:center;top:512.50px;font-size:14px;color:#41484d;">10000</div>
<div class="a" style="left:1381px;top:496px;width:140px;height:48px;background:#fff;border-bottom:1px solid #e9eaeb"></div>
<div class="t" style="left:1392px;top:512.50px;font-size:14px;color:#13b5cc;">Detail</div>
<div class="t" style="left:1441.5px;top:512.50px;font-size:14px;color:#13b5cc;">Edit</div>
<div class="t" style="left:1479px;top:512.50px;font-size:14px;color:#13b5cc;">More</div>
<div class="a" style="left:0;top:544px;width:1521px;height:44px;background:#fff;border-bottom:1px solid #e9eaeb"></div>
<div class="cb" style="left:10px;top:558px"><svg width="16" height="16" viewBox="0 0 16 16"><path d="M3.2 8 L7 11.8 L12.9 5.6" fill="none" stroke="#fff" stroke-width="2.1"/></svg></div>
<div class="t" style="left:35.5px;width:60px;text-align:center;top:558.50px;font-size:14px;color:#333;">13</div>
<svg class="a" style="left:106.89999999999998px;top:549.3px" width="22.2" height="22" viewBox="0 0 22.2 22"><rect width="22.2" height="22" fill="#d82a2a"/><circle cx="3" cy="3.5" r="2.6" fill="#f0c838"/><circle cx="8.4" cy="3.5" r="2.6" fill="#f0c838"/><circle cx="13.8" cy="3.5" r="2.6" fill="#f0c838"/><circle cx="19.2" cy="3.5" r="2.6" fill="#f0c838"/><circle cx="3" cy="3.5" r="1.2" fill="#e89a30"/><circle cx="8.4" cy="3.5" r="1.2" fill="#e89a30"/><circle cx="13.8" cy="3.5" r="1.2" fill="#e89a30"/><circle cx="19.2" cy="3.5" r="1.2" fill="#e89a30"/><rect x="0" y="7" width="22.2" height="1" fill="#b82020"/><circle cx="11" cy="11" r="1" fill="#f0f0f0"/><ellipse cx="11" cy="16.5" rx="8" ry="3" fill="#1e3a7a"/><ellipse cx="11" cy="16.5" rx="6" ry="2" fill="#f2f2f2"/><rect x="6" y="15.7" width="10" height="1.6" fill="#1e3a7a" opacity=".6"/></svg>
<div class="t" style="left:144px;top:551.50px;font-size:14px;color:#424a50;">Garden Canadian biscuits original flavor 180g</div>
<div class="t" style="left:144px;top:567.50px;font-size:12px;color:#a3a3a3;">6920907800470</div>
<div class="t" style="left:443px;top:558.50px;font-size:14px;color:#41484d;">--</div>
<div class="t" style="left:562px;top:558.50px;font-size:14px;color:#41484d;">YSSJ199</div>
<div class="t" style="left:678.5px;width:120px;text-align:center;top:558.50px;font-size:14px;color:#41484d;">bag</div>
<div class="t" style="left:1149.5px;width:120px;text-align:center;top:558.50px;font-size:14px;color:#41484d;">9997</div>
<div class="a" style="left:1381px;top:544px;width:140px;height:44px;background:#fff;border-bottom:1px solid #e9eaeb"></div>
<div class="t" style="left:1392px;top:558.50px;font-size:14px;color:#13b5cc;">Detail</div>
<div class="t" style="left:1441.5px;top:558.50px;font-size:14px;color:#13b5cc;">Edit</div>
<div class="t" style="left:1479px;top:558.50px;font-size:14px;color:#13b5cc;">More</div>
<div class="a" style="left:1371px;top:0;width:10px;height:571px;background:linear-gradient(90deg,rgba(0,0,0,0),rgba(0,0,0,.05))"></div>
</div>
<div class="a" style="left:356px;top:840px;width:1521px;height:1px;background:#e9eaeb"></div>
<div class="a" style="left:1727px;top:233px;width:10px;height:36px;background:linear-gradient(90deg,rgba(0,0,0,0),rgba(0,0,0,.05))"></div>
<div class="a" style="left:1877px;top:269px;width:4px;height:360px;border-radius:2px;background:#c6cbd0"></div>
<div class="a" style="left:475px;top:227px;width:142px;height:168px;background:#fff;border-radius:4px;box-shadow:0 4px 20px rgba(0,0,0,.16)"></div>
<div class="t" style="left:487.5px;top:240.15px;font-size:14px;color:#454f55;">Delete</div>
<div class="t" style="left:487.5px;top:272.15px;font-size:14px;color:#454f55;">Enable/Disable</div>
<div class="t" style="left:487.5px;top:304.15px;font-size:14px;color:#454f55;">Generate barcode</div>
<div class="t" style="left:487.5px;top:336.15px;font-size:14px;color:#454f55;">Print label</div>
<div class="t" style="left:487.5px;top:368.15px;font-size:14px;color:#454f55;">Move to category</div>
<div class="a" style="left:475px;top:361px;width:145px;height:32px;border:3px solid #f5242b"></div>
<div class="a" style="left:1340px;top:863px;width:28px;height:28px;border:1px solid #d9d9d9;border-radius:3px;background:#fff"></div>
<div class="a" style="left:1376px;top:863px;width:28px;height:28px;border:1px solid #3ec2d6;border-radius:3px;background:#fff"></div>
<div class="a" style="left:1412px;top:863px;width:28px;height:28px;border:1px solid #d9d9d9;border-radius:3px;background:#fff"></div>
<div class="a" style="left:1448px;top:863px;width:28px;height:28px;border:1px solid #d9d9d9;border-radius:3px;background:#fff"></div>
<div class="a" style="left:1484px;top:863px;width:28px;height:28px;border:1px solid #d9d9d9;border-radius:3px;background:#fff"></div>
<div class="a" style="left:1520px;top:863px;width:28px;height:28px;border:1px solid #d9d9d9;border-radius:3px;background:#fff"></div>
<div class="a" style="left:1592px;top:863px;width:28px;height:28px;border:1px solid #d9d9d9;border-radius:3px;background:#fff"></div>
<div class="a" style="left:1628px;top:863px;width:28px;height:28px;border:1px solid #d9d9d9;border-radius:3px;background:#fff"></div>
<div class="a" style="left:1672px;top:863px;width:101px;height:28px;border:1px solid #d9d9d9;border-radius:3px;background:#fff"></div>
<div class="a" style="left:1823px;top:863px;width:50px;height:28px;border:1px solid #d9d9d9;border-radius:3px;background:#fff"></div>
<div class="a" style="left:743px;top:1px;width:416px;height:52px;background:#fff;border-radius:4px;box-shadow:0 4px 12px rgba(0,0,0,.15)"></div>
<svg class="a" style="left:759px;top:19.7px" width="16" height="16" viewBox="0 0 16 16"><circle cx="8" cy="8" r="8" fill="#f7a325"/><path d="M8 4.3 V9.6" stroke="#fff" stroke-width="1.3"/><rect x="7.35" y="10.9" width="1.3" height="1.4" fill="#fff"/></svg>
<div class="t" style="left:783.5px;top:20.45px;font-size:14px;color:#4b5459;">It's demo. You can try after free registration.</div>
<div class="a" style="left:1063px;top:11px;width:80px;height:32px;border-radius:3px;background:#0bb7cf;box-shadow:0 2px 0 rgba(0,0,0,.03)"></div>
<div class="t" style="left:1079.5px;top:20.45px;font-size:14px;color:#fff;">Sign up</div>

</body></html>
